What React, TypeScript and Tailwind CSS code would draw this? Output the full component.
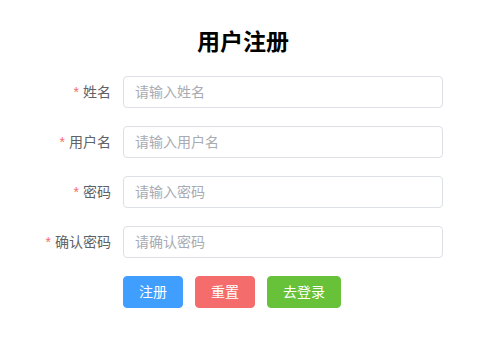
export default function App() {
  const fields = [
    { label: '姓名', placeholder: '请输入姓名', type: 'text' },
    { label: '用户名', placeholder: '请输入用户名', type: 'text' },
    { label: '密码', placeholder: '请输入密码', type: 'password' },
    { label: '确认密码', placeholder: '请确认密码', type: 'password' },
  ];

  return (
    <div
      className="w-[502px] h-[349px] bg-white"
      style={{ fontFamily: '"Liberation Sans", "Noto Sans CJK SC", sans-serif' }}
    >
      <div className="w-[486px] pt-[27px] text-center">
        <h1 className="text-[23px] leading-[30px] font-bold text-black">用户注册</h1>
      </div>

      <form className="ml-[23px] mt-[19px] w-[420px]">
        {fields.map((f) => (
          <div key={f.label} className="flex items-center h-8 mb-[18px]">
            <label className="w-[100px] pr-3 text-right text-sm text-[#606266]">
              <span className="text-[#f56c6c] mr-1">*</span>
              {f.label}
            </label>
            <input
              type="text"
              placeholder={f.placeholder}
              className="w-[320px] h-8 px-[11px] rounded border border-[#dcdfe6] text-sm text-[#606266] placeholder:text-[#a8abb2] outline-none"
            />
          </div>
        ))}

        <div className="flex gap-3 pl-[100px]">
          <button type="button" className="h-8 px-[15px] rounded border border-[#409eff] bg-[#409eff] text-sm text-white">
            注册
          </button>
          <button type="button" className="h-8 px-[15px] rounded border border-[#f56c6c] bg-[#f56c6c] text-sm text-white">
            重置
          </button>
          <button type="button" className="h-8 px-[15px] rounded border border-[#67c23a] bg-[#67c23a] text-sm text-white">
            去登录
          </button>
        </div>
      </form>
    </div>
  );
}
